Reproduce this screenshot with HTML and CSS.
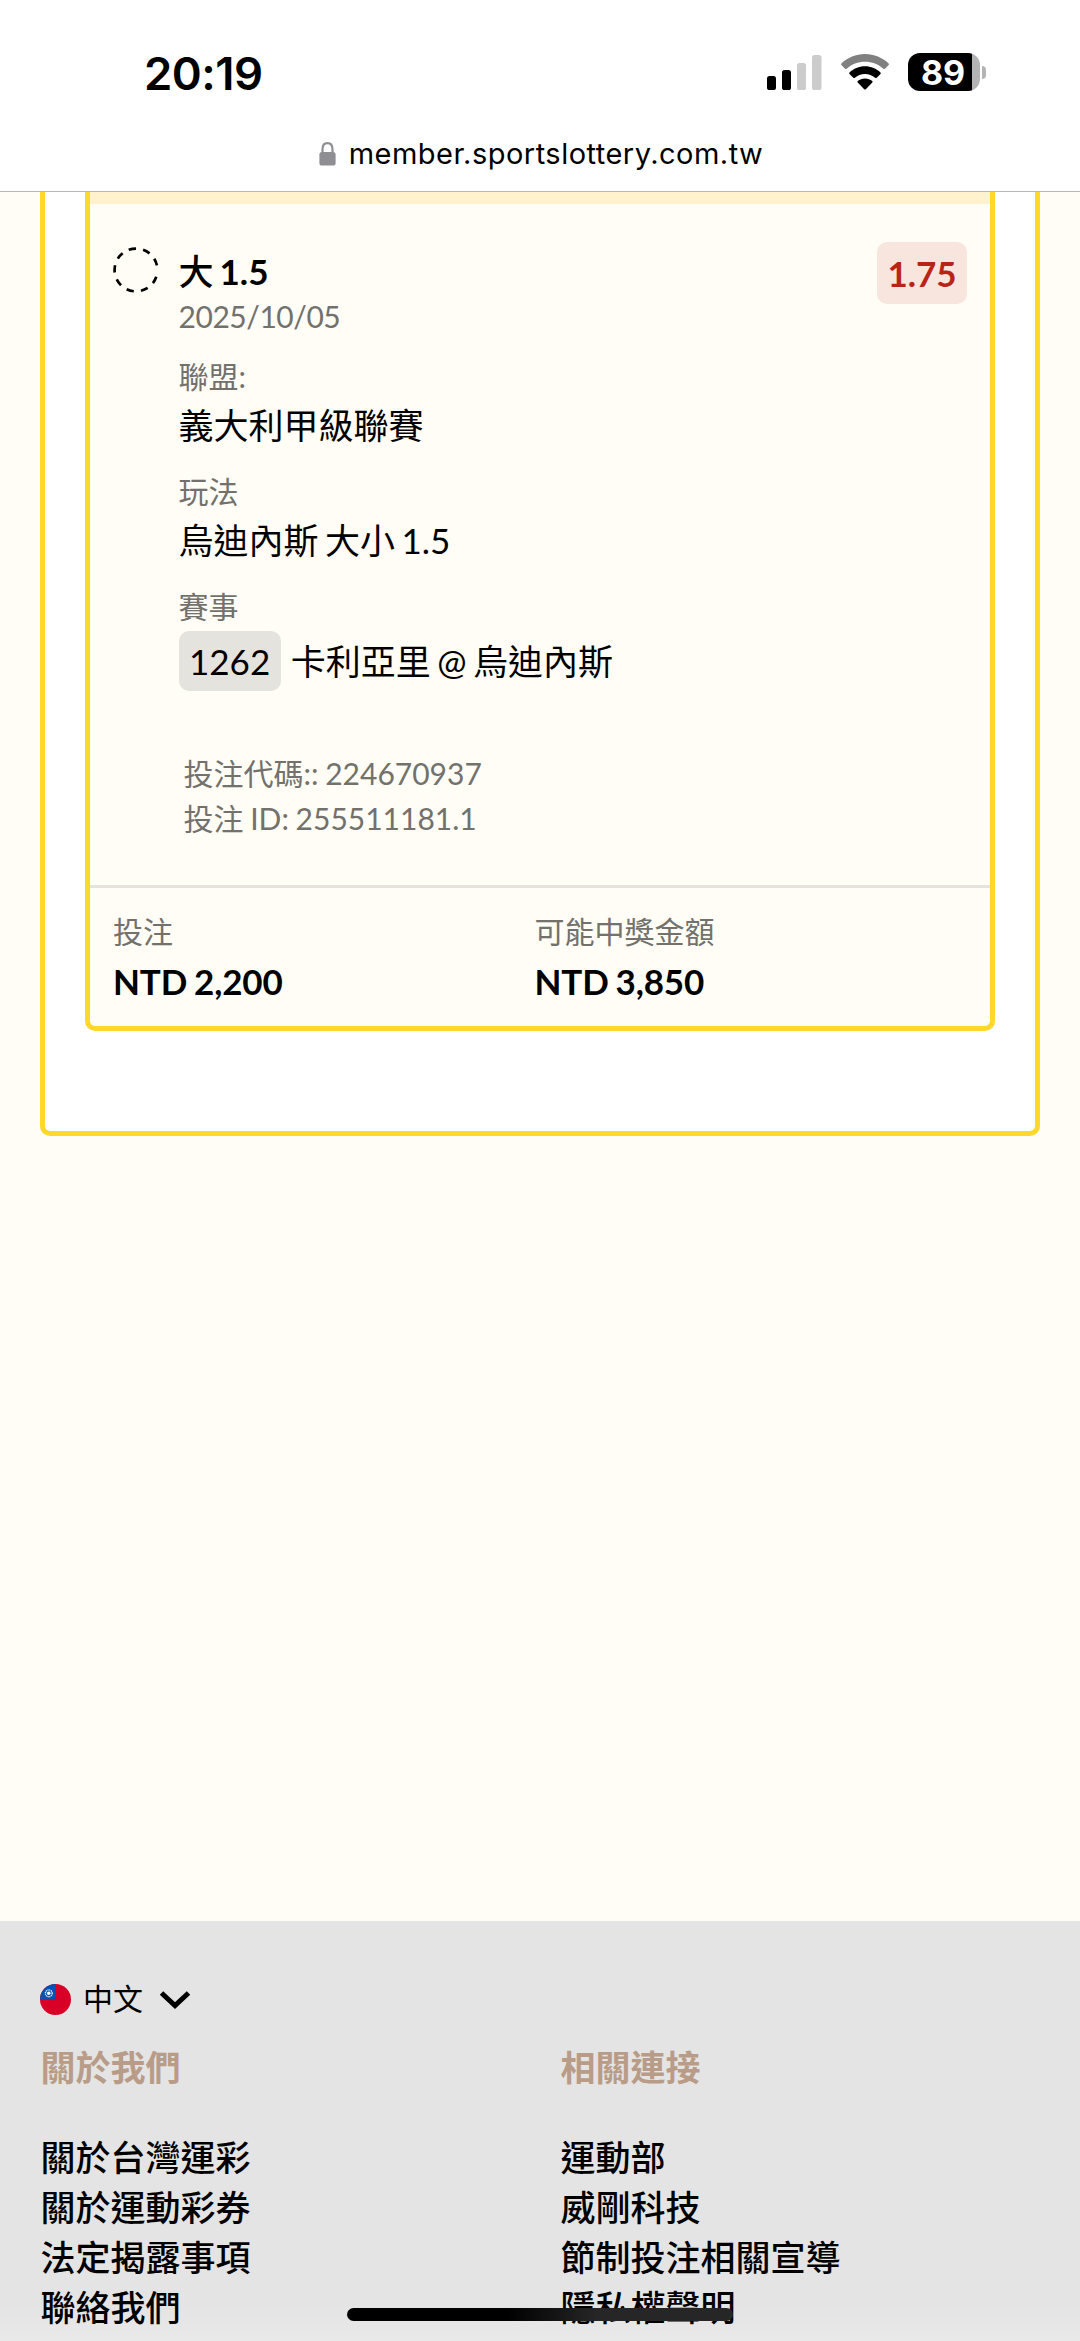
FILE: index.html
```html
<!DOCTYPE html>
<html lang="zh-Hant">
<head>
    <meta charset="UTF-8">
    <meta name="viewport" content="width=device-width, initial-scale=1.0">
    <title>台灣運彩</title>
    <link rel="stylesheet" href="styles.css">
</head>
<body>
    <header class="browser-bar">
        <div class="status">
            <div class="status-time">20:19</div>
            <div class="status-icons">
                <svg class="signal" width="55" height="36" viewBox="0 0 55 36">
                    <rect x="0" y="22" width="9" height="14" rx="2.6"/>
                    <rect x="15" y="16" width="9" height="20" rx="2.6"/>
                    <rect x="30" y="9" width="9" height="27" rx="2.6" fill="#ccc"/>
                    <rect x="45" y="1" width="9.5" height="35" rx="2.6" fill="#ccc"/>
                </svg>
                <svg class="wifi" width="48" height="36" viewBox="0 0 48 36">
                    <path d="M24 0C14.8 0 6.500 3.600.4 9.400Q-.3 10.200.4 11L4 14.800Q4.800 15.600 5.700 14.800C10.500 10.300 17 7.700 24 7.700S37.500 10.300 42.300 14.800Q43.200 15.600 44 14.800L47.600 11Q48.300 10.200 47.600 9.400C41.500 3.600 33.200 0 24 0Z" fill="#808080"/>
                    <path d="M24 12.300C18 12.300 12.500 14.700 8.500 18.500Q7.800 19.300 8.500 20L12.300 23.700Q13 24.400 13.900 23.700C16.600 21.300 20.100 19.900 24 19.900S31.400 21.300 34.100 23.700Q35 24.400 35.700 23.700L39.500 20Q40.200 19.300 39.500 18.500C35.500 14.700 30 12.300 24 12.300Z"/>
                    <path d="M24 24.400C21.200 24.400 18.700 25.400 16.700 27Q16 27.700 16.700 28.400L23.200 35.200Q24 36 24.800 35.200L31.300 28.400Q32 27.700 31.300 27C29.300 25.400 26.800 24.400 24 24.400Z"/>
                </svg>
                <div class="battery">
                    <div class="battery-level">89</div>
                    <div class="battery-cap"></div>
                </div>
            </div>
        </div>
        <div class="address">
            <svg width="17" height="24" viewBox="0 0 17 24">
                <path d="M3.500 11V7.500C3.500 3.500 5.300 1.200 8.500 1.200S13.500 3.500 13.500 7.500V11" fill="none" stroke="#8e8e93" stroke-width="2.200"/>
                <rect x=".4" y="10" width="16.200" height="13.500" rx="2.600" fill="#8e8e93"/>
            </svg>
            <span>member.sportslottery.com.tw</span>
        </div>
    </header>

    <main>
        <section class="panel">
            <article class="bet">
                <div class="bet-strip"></div>
                <div class="bet-body">
                    <svg class="bet-status" width="46" height="46" viewBox="-23 -23 46 46">
                        <path d="M20.300 6.700A21.400 21.400 0 1 1 20.900 -4.600" pathLength="329" stroke-dasharray="19.500 19.200" fill="none" stroke="#000" stroke-width="2.700"/>
                    </svg>
                    <div class="bet-info">
                        <h2 class="bet-title"><span>大</span> 1.5</h2>
                        <p class="bet-date">2025/10/05</p>
                        <dl class="bet-details">
                            <dt>聯盟:</dt>
                            <dd>義大利甲級聯賽</dd>
                            <dt>玩法</dt>
                            <dd>烏迪內斯 大小 1.5</dd>
                            <dt>賽事</dt>
                            <dd class="event"><span class="event-code">1262</span>卡利亞里 @ 烏迪內斯</dd>
                        </dl>
                        <div class="bet-ids">
                            <p>投注代碼:: 224670937</p>
                            <p>投注 ID: 255511181.1</p>
                        </div>
                    </div>
                    <span class="odds">1.75</span>
                </div>
                <div class="bet-footer">
                    <div>
                        <div class="label">投注</div>
                        <div class="amount">NTD 2,200</div>
                    </div>
                    <div>
                        <div class="label">可能中獎金額</div>
                        <div class="amount">NTD 3,850</div>
                    </div>
                </div>
            </article>
        </section>
    </main>

    <footer class="site-footer">
        <div class="language">
            <svg width="31" height="31" viewBox="0 0 30 30">
                <circle cx="15" cy="15" r="15" fill="#d80027"/>
                <path d="M15 0A15 15 0 0 0 0 15H15Z" fill="#0052b4"/>
                <circle cx="8.500" cy="9" r="3.300" fill="none" stroke="#eee" stroke-width="1.300" stroke-dasharray="1.150 .58"/>
                <circle cx="8.500" cy="9" r="1.700" fill="#fff"/>
            </svg>
            <span>中文</span>
            <svg width="32" height="20" viewBox="0 0 32 20">
                <path d="M2.500 3L16 15.500L29.500 3" fill="none" stroke="#000" stroke-width="5"/>
            </svg>
        </div>
        <div class="footer-columns">
            <div>
                <h3>關於我們</h3>
                <ul>
                    <li>關於台灣運彩</li>
                    <li>關於運動彩券</li>
                    <li>法定揭露事項</li>
                    <li>聯絡我們</li>
                </ul>
            </div>
            <div>
                <h3>相關連接</h3>
                <ul>
                    <li>運動部</li>
                    <li>威剛科技</li>
                    <li>節制投注相關宣導</li>
                    <li>隱私權聲明</li>
                </ul>
            </div>
        </div>
    </footer>
    <div class="home-indicator"></div>
</body>
</html>
```
FILE: styles.css
```css
:root {
    --yellow: #ffd829;
    --cream: #fffdf5;
    --muted: #72716d;
}

* {
    margin: 0;
    padding: 0;
    box-sizing: border-box;
}

body {
    height: 2341px;
    display: flex;
    flex-direction: column;
    overflow: hidden;
    position: relative;
    background: var(--cream);
    color: #000;
    font-family: Lato, 'Noto Sans CJK TC', sans-serif;
    font-size: 35px;
    line-height: 50px;
    word-spacing: -2.5px;
}

svg {
    display: block;
    flex-shrink: 0;
}

/* browser chrome */
.browser-bar {
    height: 192px;
    flex-shrink: 0;
    background: #fff;
    border-bottom: 1px solid #b8b8b8;
    font-family: Inter, sans-serif;
}

.status {
    display: flex;
    justify-content: space-between;
    align-items: center;
    height: 96px;
    padding: 48px 94px 0 144px;
}

.status-time {
    padding-top: 3px;
    font-size: 45.5px;
    font-weight: 600;
    letter-spacing: -0.5px;
}

.status-icons {
    display: flex;
    align-items: center;
}

.wifi {
    margin: 0 19px 0 19px;
}

.battery {
    display: flex;
    align-items: center;
    gap: 2px;
}

.battery-level {
    width: 72px;
    height: 38px;
    padding-right: 2px;
    border-radius: 12px;
    background: linear-gradient(to right, #000 64px, #b4b4b4 64px);
    color: #fff;
    font-size: 34px;
    font-weight: 700;
    line-height: 39px;
    text-align: center;
}

.battery-cap {
    width: 4px;
    height: 13px;
    border-radius: 0 5px 5px 0;
    background: #b4b4b4;
}

.address {
    display: flex;
    justify-content: center;
    align-items: center;
    gap: 13px;
    height: 50px;
    margin-top: 33px;
    padding-left: 2px;
    font-size: 29px;
    letter-spacing: 0.48px;
}

/* bet card */
main {
    height: 1729px;
    flex-shrink: 0;
    padding: 0 40px;
}

.panel {
    height: 944px;
    padding: 0 40px;
    background: #fff;
    border: 5px solid var(--yellow);
    border-top: 0;
    border-radius: 0 0 10px 10px;
}

.bet {
    height: 839px;
    background: var(--cream);
    border: 5px solid var(--yellow);
    border-top: 0;
    border-radius: 0 0 10px 10px;
}

.bet-strip {
    height: 12px;
    background: #fff2cc;
}

.bet-body {
    display: flex;
    align-items: flex-start;
    height: 681px;
    padding: 38px 23px 0 22px;
}

.bet-status {
    margin: 5px 20px 0 0.5px;
}

.bet-info {
    flex: 1;
    padding-top: 4px;
}

.bet-title {
    font-size: 35px;
    font-weight: 700;
}

.bet-title span {
    font-weight: 500;
}

.bet-date {
    margin: 1px 0 21px;
    color: var(--muted);
    font-size: 30px;
    line-height: 38px;
    letter-spacing: -0.45px;
}

.bet-details dt,
.label {
    color: var(--muted);
    font-size: 30px;
    line-height: 40px;
}

.bet-details dd {
    margin: 4px 0 21px;
}

.bet-details .event {
    display: flex;
    align-items: center;
    gap: 10px;
    margin: 5px 0 60px;
}

.event-code {
    height: 60px;
    padding: 0 10.5px;
    border-radius: 10px;
    background: #e5e3dd;
    line-height: 60px;
}

.bet-ids {
    padding-left: 5px;
    color: var(--muted);
    font-size: 30px;
    line-height: 45px;
    word-spacing: -1px;
}

.odds {
    width: 90px;
    height: 62px;
    border-radius: 10px;
    background: #f8e6de;
    color: #b92419;
    font-weight: 700;
    line-height: 63px;
    text-align: center;
}

.bet-footer {
    display: grid;
    grid-template-columns: 421.5px 1fr;
    padding: 23px 23px 0;
    border-top: 3px solid #e5e3dd;
}

.amount {
    margin-top: 5px;
    font-weight: 700;
    letter-spacing: -0.15px;
    word-spacing: -1.5px;
}

/* footer */
.site-footer {
    flex: 1;
    padding: 56px 40px 0;
    background: linear-gradient(#e4e4e4 385px, #e9e9e9);
}

.language {
    display: flex;
    align-items: center;
    height: 45px;
    font-size: 30px;
}

.language span {
    margin: -3px 16px 0 12px;
}

.footer-columns {
    display: grid;
    grid-template-columns: 520px 1fr;
    padding: 20px 0 0 0.5px;
}

.footer-columns h3 {
    margin-bottom: 40px;
    color: #b99c87;
    font-size: 35px;
    font-weight: 700;
}

.footer-columns ul {
    list-style: none;
    font-weight: 500;
}

.home-indicator {
    position: absolute;
    left: 347px;
    bottom: 20px;
    width: 386px;
    height: 13px;
    border-radius: 7px;
    background: linear-gradient(to right, #000 160px, #262626 250px);
}
```
